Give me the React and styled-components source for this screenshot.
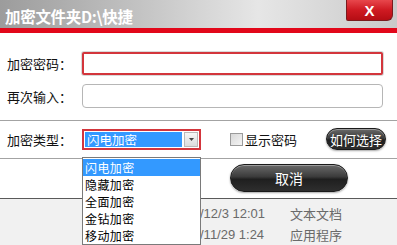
import React from 'react'
import styled, { createGlobalStyle } from 'styled-components'

const GlobalStyle = createGlobalStyle`
  html, body {
    margin: 0;
    padding: 0;
    background: #ffffff;
  }
  body {
    font-family: "Noto Sans CJK SC", "Liberation Sans", sans-serif;
    overflow: hidden;
  }
`;

const Window = styled.div`
  position: relative;
  width: 397px;
  height: 245px;
  display: flex;
  flex-direction: column;
  background: #ffffff;
  overflow: hidden;
`;

const TitleBar = styled.div`
  height: 31px;
  display: flex;
  justify-content: space-between;
  align-items: flex-start;
  background: linear-gradient(to right, #9c9c9c 0%, #bdbdbd 30%, #e6e6e6 65%, #d6d6d6 85%, #c9c9c9 100%);
`;

const Title = styled.div`
  padding: 6px 0 0 5px;
  color: #ffffff;
  font-size: 15.5px;
  font-weight: bold;
  line-height: 20px;
  letter-spacing: -0.3px;
`;

const CloseButton = styled.div`
  width: 47px;
  height: 21px;
  margin-right: 4px;
  display: flex;
  align-items: center;
  justify-content: center;
  background: linear-gradient(to bottom, #e8474c 0%, #cf1a22 50%, #b50d14 100%);
  border: 1px solid #7a1b1e;
  border-top: none;
  border-radius: 0 0 6px 2px;
  box-sizing: border-box;
  color: #ffffff;
  font-family: "Liberation Sans", sans-serif;
  font-weight: bold;
  font-size: 15px;
`;

const RedRule = styled.div`
  height: 5px;
  background: #e2071a;
`;

const Fields = styled.div`
  display: flex;
  flex-direction: column;
  gap: 9px;
  padding: 19px 0 12px 0;
`;

const Row = styled.div`
  display: flex;
  align-items: center;
  height: ${p => p.$h || 24}px;
`;

const Label = styled.div`
  width: 82px;
  padding-left: 7px;
  box-sizing: border-box;
  font-size: 13px;
  color: #111111;
`;

const TextBox = styled.div`
  width: 301px;
  height: 100%;
  box-sizing: border-box;
  background: #ffffff;
  border: ${p => (p.$active ? '2px solid #d3353c' : '1px solid #b6b6b6')};
  border-radius: ${p => (p.$active ? '2px' : '4px')};
  box-shadow: ${p => (p.$active ? '0 0 0 1px #d9d9d9' : 'none')};
`;

const Separator = styled.div`
  height: 1px;
  background: ${p => p.$dark ? '#5a5a5a' : '#a3a3a3'};
`;

const TypeRow = styled.div`
  display: flex;
  align-items: center;
  height: 40px;
`;

const Select = styled.div`
  width: 119px;
  height: 21px;
  box-sizing: border-box;
  border: 2px solid #d3353c;
  display: flex;
  align-items: stretch;
  padding: 1px;
  background: #ffffff;
`;

const SelectValue = styled.div`
  flex: 1;
  background: #3399ff;
  color: #ffffff;
  font-size: 12.5px;
  line-height: 15px;
  padding-left: 2px;
`;

const ArrowBox = styled.div`
  width: 14px;
  margin-left: 2px;
  box-sizing: border-box;
  border: 1px solid #b9b9b9;
  background: linear-gradient(to bottom, #f6f6f6, #dcdcdc);
  display: flex;
  align-items: center;
  justify-content: center;
`;

const CheckWrap = styled.label`
  display: flex;
  align-items: center;
  margin-left: 29px;
  font-size: 13px;
  color: #111111;
  gap: 2px;
`;

const CheckBox = styled.span`
  width: 13px;
  height: 13px;
  box-sizing: border-box;
  border: 1px solid #9a9a9a;
  background: linear-gradient(135deg, #d8d8d8, #f4f4f4);
`;

const PillButton = styled.div`
  width: ${p => p.$w}px;
  height: ${p => p.$h}px;
  box-sizing: border-box;
  border-radius: ${p => p.$h / 2}px;
  border: 1px solid #1a1a1a;
  background: linear-gradient(to bottom, #6a6a6a 0%, #3b3b3b 45%, #1f1f1f 55%, #2e2e2e 100%);
  box-shadow: inset 0 1px 0 rgba(255,255,255,0.35), 0 1px 2px rgba(0,0,0,0.35);
  color: #ffffff;
  font-size: ${p => p.$fs}px;
  display: flex;
  align-items: center;
  justify-content: center;
  margin-left: ${p => p.$ml || 0}px;
`;

const ButtonRow = styled.div`
  display: flex;
  align-items: center;
  height: 43px;
`;

const FileList = styled.div`
  flex: 1;
  background: #f1f1f1;
  padding-top: 4px;
  display: flex;
  flex-direction: column;
`;

const FileRow = styled.div`
  display: flex;
  height: 21px;
  align-items: center;
  font-size: 13px;
  color: #6a6a6a;
`;

const FileDate = styled.div`
  width: 90px;
  margin-left: 200px;
  font-family: "Liberation Sans", "Noto Sans CJK SC", sans-serif;
`;

const Dropdown = styled.div`
  position: absolute;
  left: 82px;
  top: 157px;
  width: 119px;
  box-sizing: border-box;
  background: #ffffff;
  border: 1px solid #7a7a7a;
  padding: 1px 0 0 0;
`;

const Option = styled.div`
  height: 17px;
  line-height: 17px;
  padding-left: 2px;
  font-size: 12px;
  letter-spacing: 0.4px;
  overflow: hidden;
  color: ${p => (p.$active ? '#ffffff' : '#000000')};
  background: ${p => (p.$active ? '#3399ff' : '#ffffff')};
`;

const options = ['闪电加密', '隐藏加密', '全面加密', '金钻加密', '移动加密']

const files = [
  { date: '/12/3 12:01', type: '文本文档' },
  { date: '/11/29 1:24', type: '应用程序' },
]

const App = () => {
  return (
    <Window>
      <GlobalStyle />
      <TitleBar>
        <Title>加密文件夹D:\快捷</Title>
        <CloseButton>X</CloseButton>
      </TitleBar>
      <RedRule />
      <Fields>
        <Row $h={23}>
          <Label>加密密码：</Label>
          <TextBox $active />
        </Row>
        <Row $h={24}>
          <Label>再次输入：</Label>
          <TextBox />
        </Row>
      </Fields>
      <Separator />
      <TypeRow>
        <Label>加密类型：</Label>
        <Select>
          <SelectValue>闪电加密</SelectValue>
          <ArrowBox>
            <svg width="5" height="3" viewBox="0 0 5 3">
              <path d="M0 0 L5 0 L2.5 3 Z" fill="#444" />
            </svg>
          </ArrowBox>
        </Select>
        <CheckWrap>
          <CheckBox />
          显示密码
        </CheckWrap>
        <PillButton $w={60} $h={22} $fs={13} $ml={29}>如何选择</PillButton>
      </TypeRow>
      <Separator />
      <ButtonRow>
        <PillButton $w={118} $h={28} $fs={14} $ml={230}>取消</PillButton>
      </ButtonRow>
      <Separator $dark />
      <FileList>
        {files.map(f => (
          <FileRow key={f.date}>
            <FileDate>{f.date}</FileDate>
            <div>{f.type}</div>
          </FileRow>
        ))}
      </FileList>
      <Dropdown>
        {options.map((o, i) => (
          <Option key={o} $active={i === 0}>{o}</Option>
        ))}
      </Dropdown>
    </Window>
  )
}

export default App
